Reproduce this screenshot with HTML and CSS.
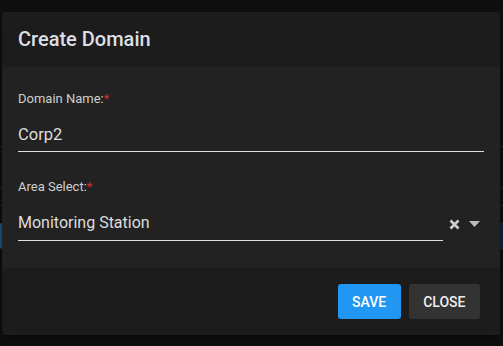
FILE: index.html
```
<!DOCTYPE html>
<html lang="en">
<head>
    <meta charset="UTF-8">
    <meta name="viewport" content="width=device-width, initial-scale=1.0">
    <title>Create Domain</title>
    <link rel="stylesheet" href="styles.css">
</head>
<body>
    <div class="page">
        <div class="row"></div>
        <div class="row row-short"></div>
        <div class="row row-short"></div>
        <div class="row active"></div>
        <div class="row"></div>
    </div>

    <div class="modal">
        <div class="modal-header">
            <h2>Create Domain</h2>
        </div>

        <div class="modal-body">
            <div class="field">
                <label>Domain Name:<span class="req">*</span></label>
                <div class="input">Corp2</div>
            </div>

            <div class="field field-select">
                <label>Area Select:<span class="req">*</span></label>
                <div class="select-row">
                    <div class="input">Monitoring Station</div>
                    <span class="icon clear">
                        <svg width="11" height="11" viewBox="0 0 11 11">
                            <path d="M1.5 1.5 L9.5 9.5 M9.5 1.5 L1.5 9.5" stroke="#cfcfcf" stroke-width="2.6" fill="none"/>
                        </svg>
                    </span>
                    <span class="icon caret">
                        <svg width="11" height="6" viewBox="0 0 11 6">
                            <path d="M0 0 H11 L5.5 6 Z" fill="#bdbdbd"/>
                        </svg>
                    </span>
                </div>
            </div>
        </div>

        <div class="modal-footer">
            <button class="button primary">SAVE</button>
            <button class="button">CLOSE</button>
        </div>
    </div>
</body>
</html>
```

FILE: styles.css
```
body {
    font-family: Roboto, 'Liberation Sans', sans-serif;
    margin: 0;
    background-color: #101010;
    height: 346px;
    overflow: hidden;
}
.page {
    padding-top: 146px;
}
.row {
    height: 40px;
    border-top: 1px solid #2a2a2a;
}
.row-short {
    height: 17px;
}
.row.active {
    height: 24px;
    border-left: 2px solid #1d5a8c;
    background: #13243a;
}
.modal {
    position: absolute;
    top: 12px;
    left: 2px;
    width: 498px;
    border-radius: 4px;
    overflow: hidden;
    background: #1c1c1c;
    box-shadow: 0 4px 16px rgba(0,0,0,0.5);
}
.modal-header {
    padding: 15px 16px 16px;
    background: #1c1c1c;
}
.modal-header h2 {
    margin: 0;
    font-size: 20px;
    line-height: 24px;
    font-weight: 500;
    color: #dcdfe3;
}
.modal-body {
    background: #222222;
    padding: 24px 16px 27px 16px;
}
.field label {
    display: block;
    font-size: 13px;
    line-height: 16px;
    color: #cfcfcf;
}
.req {
    color: #d32f2f;
}
.input {
    padding: 18px 0 6px;
    font-size: 16.5px;
    line-height: 20px;
    color: #dddddd;
    border-bottom: 1px solid #dddddd;
}
.field-select {
    margin-top: 27px;
}
.select-row {
    display: flex;
    align-items: flex-end;
}
.select-row .input {
    flex: 1;
    font-size: 16px;
    padding-bottom: 7px;
}
.icon {
    display: flex;
    align-items: center;
    justify-content: center;
    width: 20px;
    height: 20px;
    margin-bottom: 7px;
}
.icon.clear {
    margin-left: 1px;
}
.modal-footer {
    display: flex;
    justify-content: flex-end;
    gap: 8px;
    padding: 16px 20px;
    background: #1c1c1c;
}
.button {
    font-family: Roboto, 'Liberation Sans', sans-serif;
    height: 35px;
    padding: 0 14.5px;
    border: none;
    border-radius: 3px;
    background: #333333;
    color: #eeeeee;
    font-size: 14px;
    font-weight: 500;
    cursor: pointer;
}
.button.primary {
    background: #2196f3;
    color: #ffffff;
}
```
